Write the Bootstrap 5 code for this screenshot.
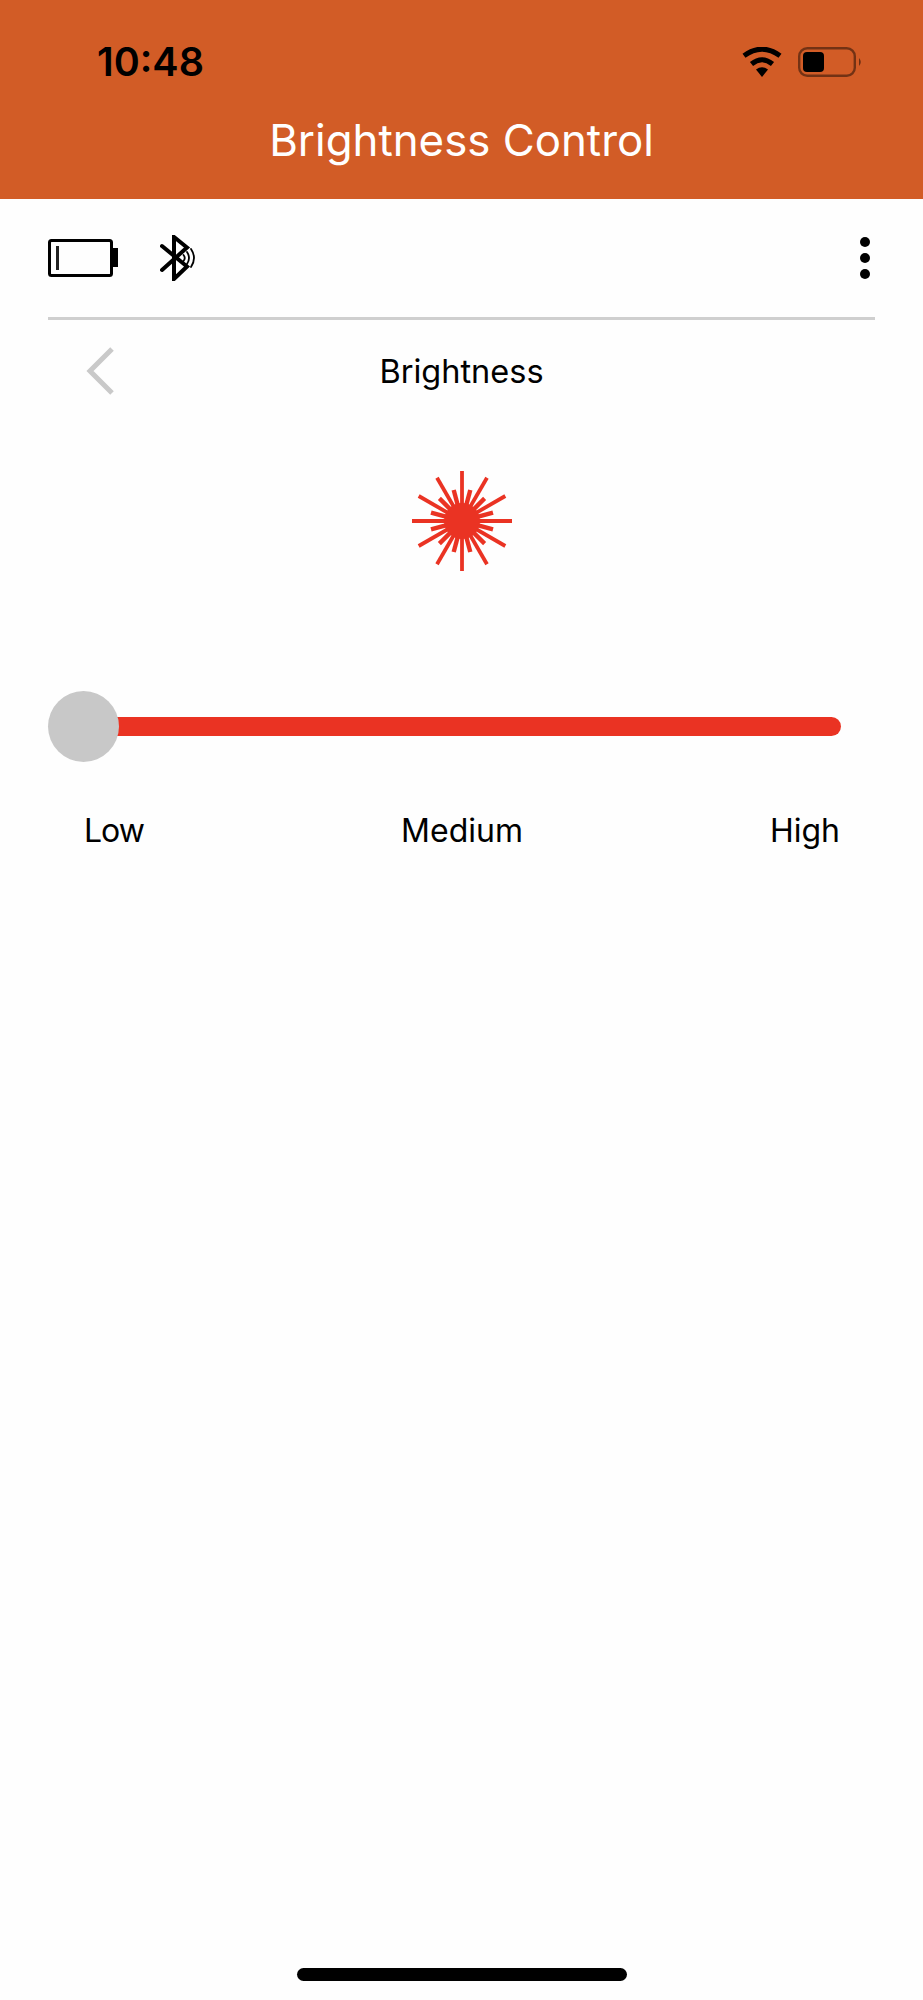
<!DOCTYPE html>
<html lang="en">
<head>
<meta charset="utf-8">
<title>Brightness Control</title>
<link href="https://cdn.jsdelivr.net/npm/bootstrap@5.3.0/dist/css/bootstrap.min.css" rel="stylesheet">
<style>
html, body { height: 2000px; overflow: hidden; background: #fefefe; }
body { font-family: Inter, "Liberation Sans", sans-serif; color: #000; position: relative; }
.app-head { background: #d25c26; height: 199px; padding: 34px 48px 0 97px; }
.status-row { height: 56px; padding-right: 12px; }
.clock { font-size: 39.5px; font-weight: 600; line-height: 1; margin-top: 2px; }
.app-title { font-size: 43.8px; line-height: 1; color: #fff; margin: 29px 0 0 -97px; text-align: center; width: 923px; font-weight: 400; }
.tool-row { height: 121px; margin: 0 48px; border-bottom: 3px solid #cfcfcf; padding-right: 4px; }
.bt-icon { margin-left: 42px; }
.crumb { height: 104px; margin: 0 48px; position: relative; }
.crumb-title { font-size: 32.5px; line-height: 1; margin: 0; }
.back-link { position: absolute; left: 37px; top: 27px; line-height: 0; }
.burst-wrap { height: 104px; margin-top: 45px; }
.slider-wrap { position: relative; height: 71px; margin: 118px 0 0 48px; width: 793px; }
.slider-track { position: absolute; left: 50px; right: 0; top: 26px; height: 19px; background: #ea3323; border-radius: 0 10px 10px 0; }
.slider-thumb { position: absolute; left: 0; top: 0; width: 71px; height: 71px; border-radius: 50%; background: #c8c8c8; }
.scale-row { margin: 51px 83px 0 84px; font-size: 32px; line-height: 36px; white-space: nowrap; }
.scale-low { letter-spacing: -1px; }
.home-bar { position: absolute; left: 297px; top: 1968px; width: 330px; height: 13px; border-radius: 7px; background: #000; }
</style>
</head>
<body>
<header class="app-head">
  <div class="status-row d-flex align-items-center justify-content-between">
    <span class="clock">10:48</span>
    <span class="d-flex align-items-center gap-3">
      <svg width="40" height="30" viewBox="0 0 40 30" aria-hidden="true">
        <path d="M20 30 L14 22.5 Q20 18 26 22.5 Z" fill="#000"/>
        <path d="M9.5 17 Q20 8.5 30.5 17" fill="none" stroke="#000" stroke-width="5"/>
        <path d="M2 8.8 Q20 -4.5 38 8.8" fill="none" stroke="#000" stroke-width="5"/>
      </svg>
      <svg width="65" height="30" viewBox="0 0 65 30" aria-hidden="true">
        <rect x="1.2" y="1.2" width="55.6" height="27.6" rx="8" fill="none" stroke="#000" stroke-opacity=".45" stroke-width="2.4"/>
        <rect x="5" y="5" width="21" height="20" rx="4" fill="#000"/>
        <path d="M61 11 Q64.5 15 61 19 Z" fill="#000" fill-opacity=".5"/>
      </svg>
    </span>
  </div>
  <h1 class="app-title">Brightness Control</h1>
</header>

<div class="tool-row d-flex align-items-center justify-content-between">
  <div class="d-flex align-items-center">
    <svg width="70" height="38" viewBox="0 0 70 38" aria-hidden="true">
      <rect x="1.5" y="1.5" width="62" height="35" rx="2" fill="none" stroke="#000" stroke-width="3"/>
      <rect x="63" y="9" width="7" height="19" fill="#000"/>
      <rect x="8" y="7" width="3" height="24" fill="#222"/>
    </svg>
    <svg class="bt-icon" width="37" height="46" viewBox="0 0 37 46" aria-hidden="true">
      <path d="M2 11 L27 31.5 L14 44 V2 L27 12.5 L2 35" fill="none" stroke="#000" stroke-width="4" stroke-linecap="round" stroke-linejoin="miter"/>
      <path d="M23.5 20 Q26 23 23.5 26 M27 17 Q31 23 27 29 M31 14 Q37 23 31 32" fill="none" stroke="#000" stroke-width="1.8" stroke-linecap="round"/>
    </svg>
  </div>
  <svg width="12" height="44" viewBox="0 0 12 44" aria-hidden="true">
    <circle cx="6" cy="6" r="5" fill="#000"/>
    <circle cx="6" cy="22" r="5" fill="#000"/>
    <circle cx="6" cy="38" r="5" fill="#000"/>
  </svg>
</div>

<div class="crumb d-flex align-items-center justify-content-center">
  <a class="back-link" href="#" aria-label="Back">
    <svg width="30" height="48" viewBox="0 0 30 48" aria-hidden="true">
      <path d="M27 2 L5 24 L27 46" fill="none" stroke="#c9c9c9" stroke-width="5"/>
    </svg>
  </a>
  <p class="crumb-title">Brightness</p>
</div>

<div class="burst-wrap d-flex justify-content-center">
  <svg width="104" height="104" viewBox="-52 -52 104 104" aria-hidden="true">
    <g stroke="#ea3323" stroke-width="3.8">
      <line x1="0" y1="-50" x2="0" y2="50"/>
      <line x1="-50" y1="0" x2="50" y2="0"/>
      <line x1="-25" y1="-43.3" x2="25" y2="43.3"/>
      <line x1="25" y1="-43.3" x2="-25" y2="43.3"/>
      <line x1="-43.3" y1="-25" x2="43.3" y2="25"/>
      <line x1="43.3" y1="-25" x2="-43.3" y2="25"/>
    </g>
    <g stroke="#ea3323" stroke-width="4.4">
      <line x1="-8.3" y1="-31" x2="8.3" y2="31"/>
      <line x1="8.3" y1="-31" x2="-8.3" y2="31"/>
      <line x1="-22.6" y1="-22.6" x2="22.6" y2="22.6"/>
      <line x1="22.6" y1="-22.6" x2="-22.6" y2="22.6"/>
      <line x1="-31" y1="-8.3" x2="31" y2="8.3"/>
      <line x1="31" y1="-8.3" x2="-31" y2="8.3"/>
    </g>
    <circle r="18" fill="#ea3323"/>
  </svg>
</div>

<div class="slider-wrap">
  <div class="slider-track"></div>
  <div class="slider-thumb"></div>
</div>

<div class="scale-row row g-0">
  <span class="col text-start scale-low">Low</span>
  <span class="col text-center">Medium</span>
  <span class="col text-end">High</span>
</div>

<div class="home-bar"></div>
<script src="https://cdn.jsdelivr.net/npm/bootstrap@5.3.0/dist/js/bootstrap.bundle.min.js"></script>
</body>
</html>
